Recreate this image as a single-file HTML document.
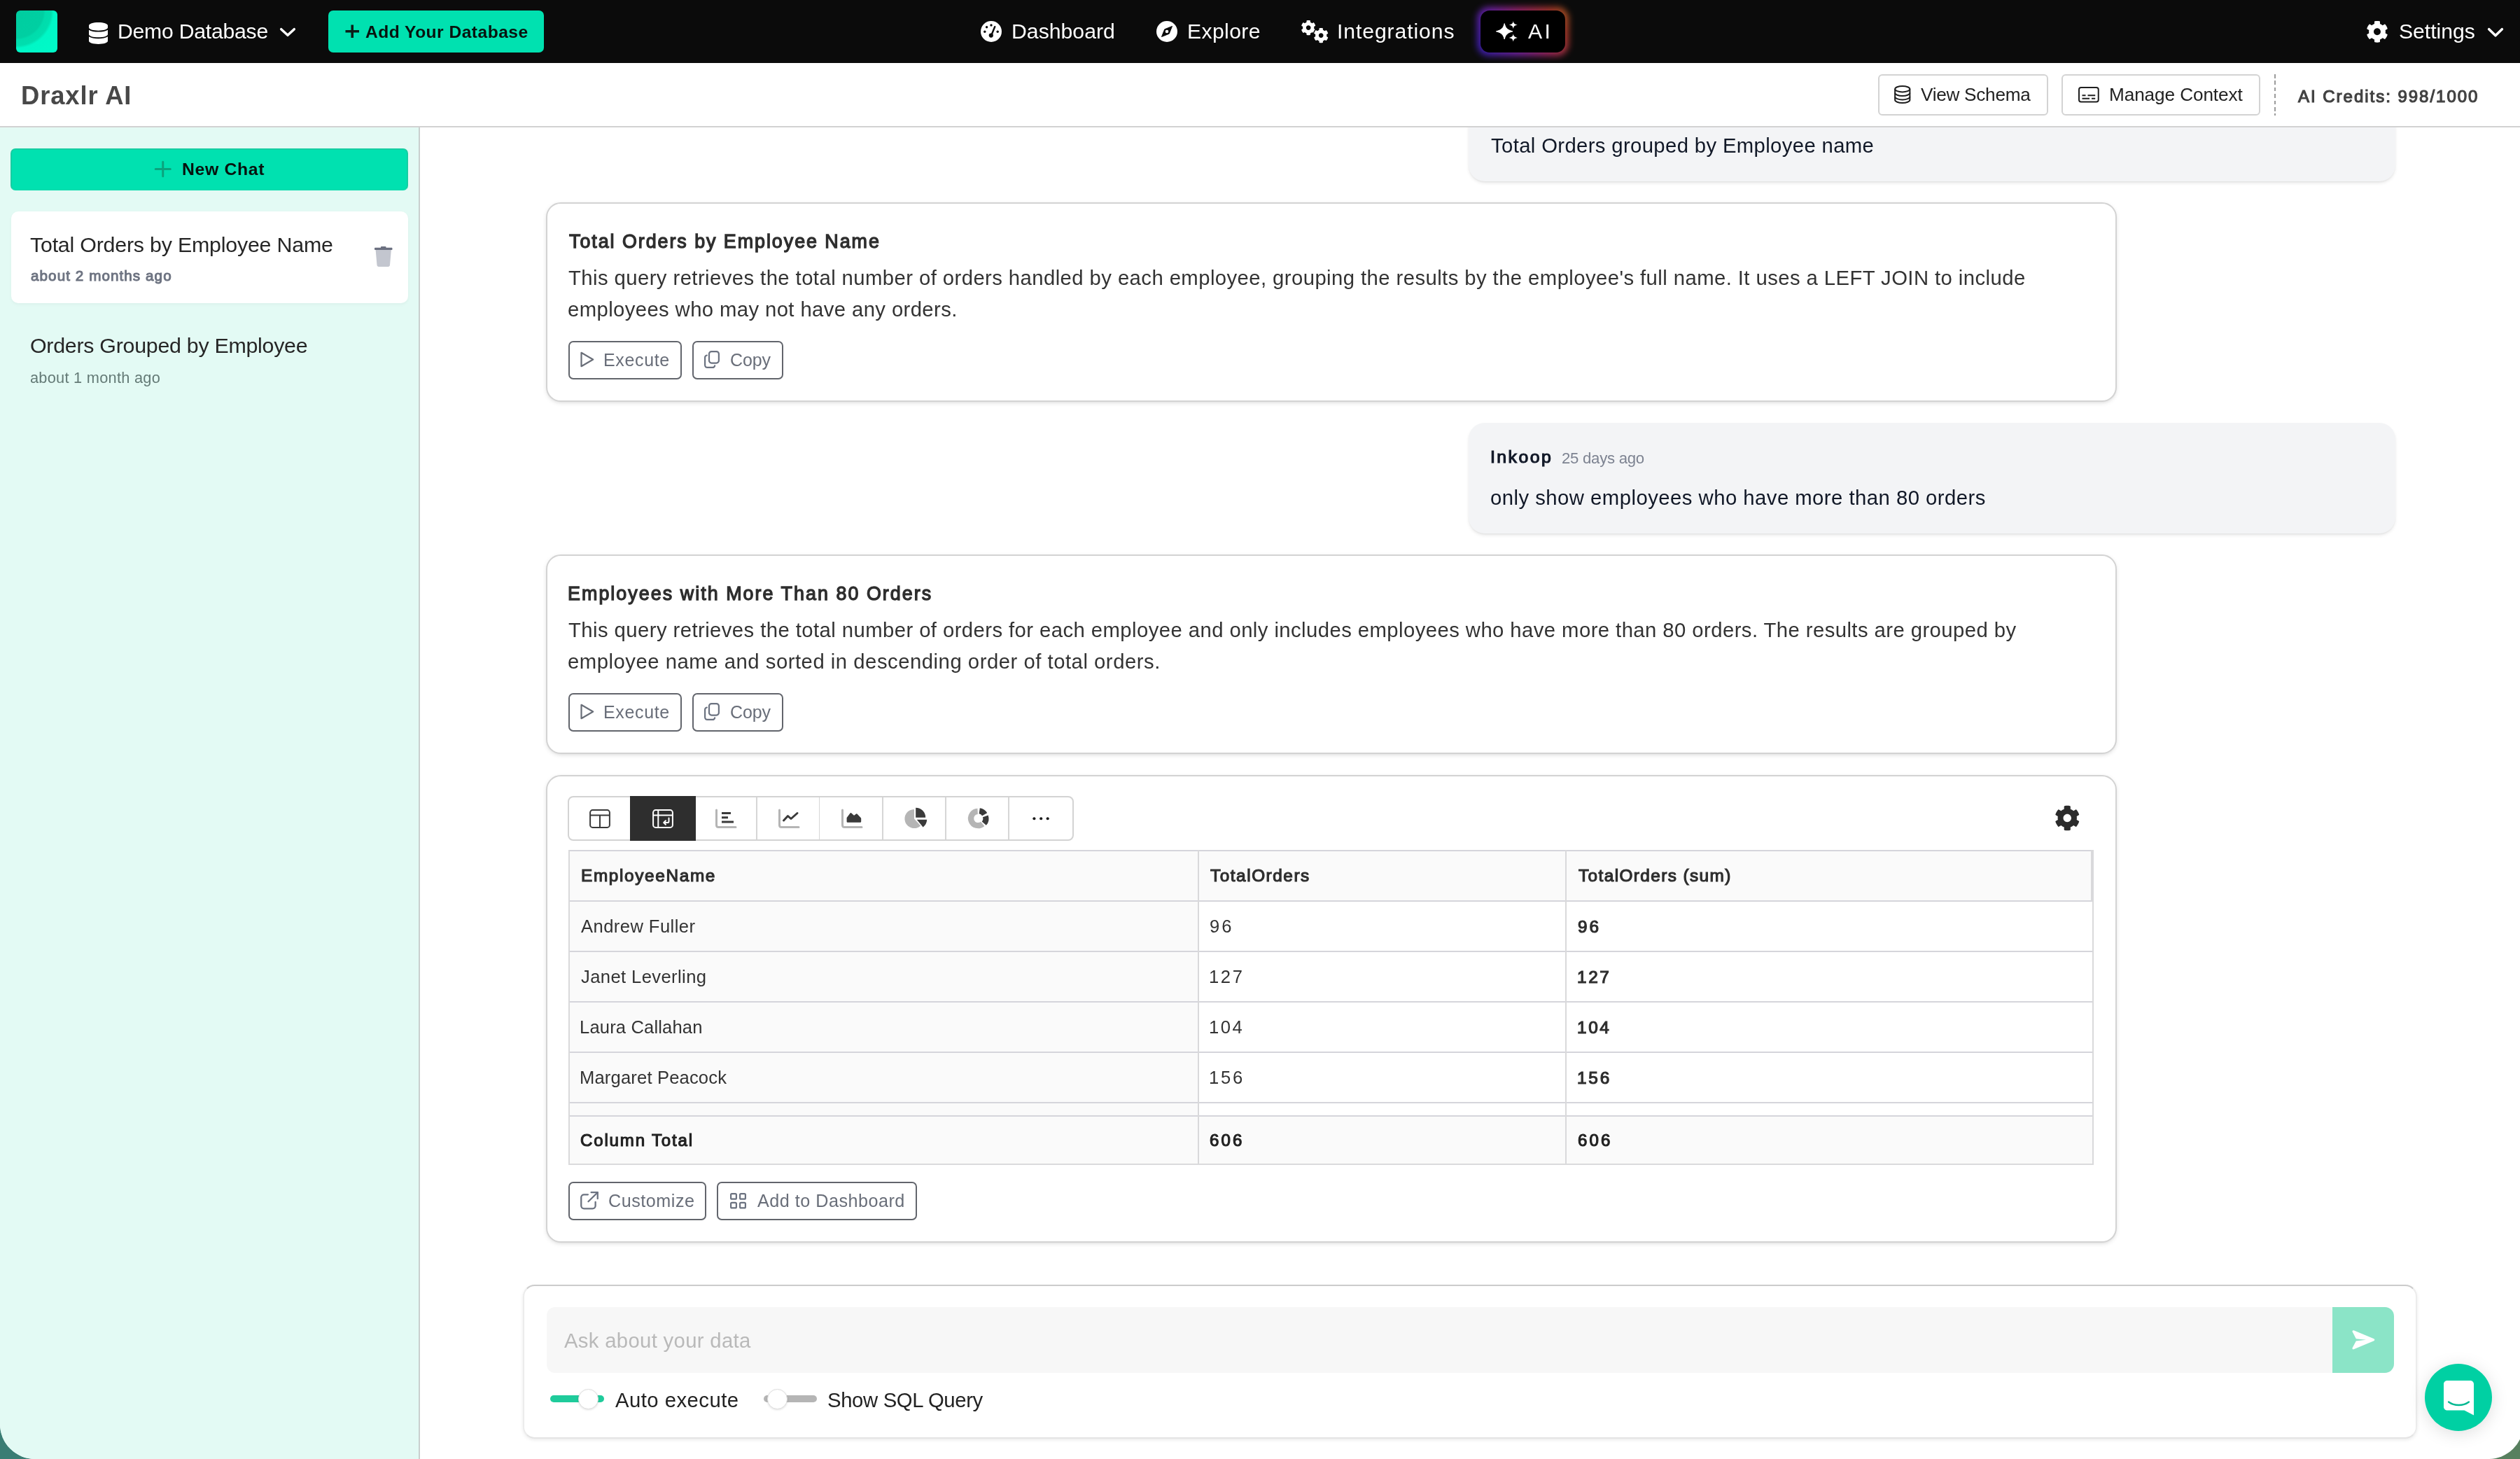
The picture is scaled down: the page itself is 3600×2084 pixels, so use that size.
<!DOCTYPE html>
<html lang="en"><head><meta charset="utf-8"><title>Draxlr AI</title>
<style>
html,body{margin:0;padding:0;}
html{overflow:hidden;background:#fff;}
body{width:3600px;height:2084px;overflow:hidden;background:linear-gradient(90deg,#3a7d74 0,#4a7f6c 50%,#58805f 100%);font-family:"Liberation Sans",Arial,sans-serif;}
#app{position:relative;width:3605px;height:2084px;background:#fff;overflow:hidden;border-radius:0 0 50px 50px;}
.t{position:absolute;white-space:nowrap;line-height:1;will-change:transform;}
.b{position:absolute;box-sizing:border-box;}
svg{position:absolute;overflow:visible;}

</style></head><body>
<div id="app">
<div class="b" style="left:2098px;top:150px;width:1324.3px;height:109px;background:#f3f4f6;box-shadow:0 3px 5px rgba(0,0,0,.07),0 2px 3px -1px rgba(0,0,0,.07);border-radius:23px;"></div>
<nav>
<div class="b" style="left:0px;top:0px;width:3600px;height:90px;background:#0b0b0b;"></div>
<div class="b" style="left:23px;top:15px;width:59px;height:60px;border-radius:6px;background:radial-gradient(circle at 0 0, #00cda0 0, #00cfa2 39px, #00dcac 42px, #00deae 50px, #00f7c6 54px, #00fac8 100%);"></div>
<svg style="left:127px;top:31.5px" width="27" height="31" viewBox="0 0 448 512" preserveAspectRatio="none"><path fill="#fff" d="M448 73.143v45.714C448 159.143 347.667 192 224 192S0 159.143 0 118.857V73.143C0 32.857 100.333 0 224 0s224 32.857 224 73.143zM448 176v102.857C448 319.143 347.667 352 224 352S0 319.143 0 278.857V176c48.125 33.143 136.208 48.572 224 48.572S399.874 209.143 448 176zm0 160v102.857C448 479.143 347.667 512 224 512S0 479.143 0 438.857V336c48.125 33.143 136.208 48.572 224 48.572S399.874 369.143 448 336z"/></svg>
<div class="t" style="left:168.02px;top:30.24px;font-size:30.20px;letter-spacing:-0.243px;color:#fff;">Demo Database</div>
<svg style="left:400px;top:40px" width="22" height="12" viewBox="0 0 22 12"><path d="M1.7 1.7 L11 10.3 L20.3 1.7" fill="none" stroke="#fff" stroke-width="3.5" stroke-linecap="round" stroke-linejoin="round"/></svg>
<div class="b" style="left:469px;top:15px;width:308px;height:60px;background:#00e1b0;border-radius:7px;"></div>
<svg style="left:492.5px;top:35px" width="20.5" height="19.5" viewBox="0 0 20.5 19.5"><path d="M10.25 0.5V19 M0.5 9.75H20" fill="none" stroke="#0c1f18" stroke-width="3.6"/></svg>
<div class="t" style="left:522.41px;top:33.88px;font-size:24.60px;letter-spacing:0.471px;color:#08130f;font-weight:700;">Add Your Database</div>
<svg style="left:1401px;top:29.5px" width="30" height="30" viewBox="0 0 30 30"><circle cx="15" cy="15" r="15" fill="#fff"/>
<circle cx="5.800" cy="15.200" r="1.700" fill="#0b0b0b"/><circle cx="8.600" cy="8.800" r="1.700" fill="#0b0b0b"/><circle cx="15" cy="6" r="1.700" fill="#0b0b0b"/><circle cx="24.200" cy="15.200" r="1.700" fill="#0b0b0b"/>
<path d="M20.200 8.200 L15.600 19.500" stroke="#0b0b0b" stroke-width="2.400" stroke-linecap="round"/><circle cx="14.800" cy="20.600" r="3.100" fill="#0b0b0b"/></svg>
<div class="t" style="left:1445.02px;top:30.24px;font-size:30.20px;letter-spacing:0.021px;color:#fff;">Dashboard</div>
<svg style="left:1652px;top:29.5px" width="30" height="30" viewBox="0 0 30 30"><circle cx="15" cy="15" r="15" fill="#fff"/>
<path d="M22.500 7.500 L18.200 18.200 L7.500 22.500 L11.800 11.800 Z" fill="#0b0b0b" stroke="#0b0b0b" stroke-width="1" stroke-linejoin="round"/><circle cx="15" cy="15" r="2.300" fill="#fff"/></svg>
<div class="t" style="left:1695.52px;top:30.24px;font-size:30.20px;letter-spacing:0.360px;color:#fff;">Explore</div>
<svg style="left:1858.700px;top:29.300px" width="20.400" height="21.200" viewBox="14 10 484 492" preserveAspectRatio="none"><path fill="#fff" d="M487.4 315.7l-42.6-24.6c4.3-23.2 4.3-47 0-70.2l42.6-24.6c4.9-2.8 7.1-8.6 5.5-14-11.1-35.6-30-67.8-54.7-94.600-3.800-4.100-10-5.100-14.800-2.300L380.800 110c-17.900-15.400-38.500-27.300-60.800-35.100V25.800c0-5.600-3.900-10.500-9.400-11.700-36.700-8.200-74.300-7.800-109.200 0-5.500 1.200-9.400 6.100-9.400 11.700V75c-22.200 7.900-42.800 19.800-60.800 35.100L88.700 85.500c-4.900-2.800-11-1.900-14.800 2.300-24.700 26.700-43.600 58.900-54.700 94.600-1.700 5.400.6 11.200 5.500 14L67.300 221c-4.300 23.200-4.300 47 0 70.200l-42.600 24.600c-4.900 2.800-7.100 8.600-5.500 14 11.100 35.600 30 67.800 54.700 94.600 3.800 4.100 10 5.100 14.800 2.300l42.600-24.600c17.900 15.400 38.500 27.300 60.800 35.100v49.200c0 5.600 3.900 10.500 9.400 11.700 36.700 8.200 74.300 7.800 109.200 0 5.500-1.200 9.400-6.100 9.400-11.700v-49.200c22.200-7.900 42.800-19.800 60.800-35.100l42.600 24.600c4.900 2.800 11 1.900 14.800-2.300 24.700-26.700 43.600-58.900 54.700-94.600 1.500-5.500-.7-11.300-5.600-14.100zM256 336c-44.100 0-80-35.900-80-80s35.900-80 80-80 80 35.900 80 80-35.900 80-80 80z"/></svg>
<svg style="left:1876.500px;top:39.800px" width="20.400" height="21.200" viewBox="14 10 484 492" preserveAspectRatio="none"><path fill="#fff" stroke="#0b0b0b" stroke-width="70" paint-order="stroke" d="M487.4 315.7l-42.6-24.6c4.3-23.2 4.3-47 0-70.2l42.6-24.6c4.9-2.8 7.1-8.6 5.5-14-11.1-35.6-30-67.8-54.7-94.600-3.800-4.100-10-5.100-14.800-2.300L380.800 110c-17.900-15.400-38.500-27.300-60.800-35.100V25.800c0-5.600-3.900-10.500-9.400-11.700-36.700-8.200-74.300-7.800-109.200 0-5.500 1.200-9.400 6.100-9.400 11.700V75c-22.200 7.900-42.800 19.800-60.800 35.100L88.700 85.500c-4.900-2.800-11-1.900-14.800 2.300-24.700 26.700-43.600 58.900-54.700 94.600-1.700 5.400.6 11.200 5.500 14L67.300 221c-4.300 23.200-4.300 47 0 70.200l-42.600 24.600c-4.900 2.800-7.100 8.600-5.500 14 11.100 35.600 30 67.800 54.700 94.600 3.800 4.100 10 5.100 14.800 2.300l42.600-24.600c17.900 15.400 38.500 27.300 60.800 35.100v49.200c0 5.600 3.900 10.500 9.400 11.700 36.700 8.200 74.300 7.800 109.200 0 5.500-1.200 9.400-6.100 9.400-11.700v-49.200c22.200-7.900 42.800-19.800 60.800-35.100l42.600 24.600c4.900 2.800 11 1.900 14.800-2.300 24.700-26.700 43.600-58.900 54.700-94.600 1.500-5.500-.7-11.300-5.600-14.100zM256 336c-44.100 0-80-35.900-80-80s35.900-80 80-80 80 35.900 80 80-35.900 80-80 80z"/></svg>
<div class="t" style="left:1909.72px;top:30.24px;font-size:30.20px;letter-spacing:0.891px;color:#fff;">Integrations</div>
<div class="b" style="left:2110px;top:10px;width:130.5px;height:69.5px;border-radius:17px;background:linear-gradient(60deg,#3a22d9 0%,#8a28c8 35%,#c42d7a 60%,#d6452f 85%,#d97a2a 100%);filter:blur(5px);opacity:.78;"></div>
<div class="b" style="left:2115px;top:15px;width:120.5px;height:59.5px;border-radius:13px;background:#000;"></div>
<svg style="left:2137.5px;top:30px" width="30" height="29.5" viewBox="0 0 30 29.5">
<path fill="#fff" d="M11.2 3.6 C12.8 10.2 15.400 12.800 23 14.800 C15.400 16.800 12.800 19.400 11.200 26 C9.600 19.400 7 16.800 -0.600 14.800 C7 12.800 9.600 10.200 11.200 3.600Z" stroke="#fff" stroke-width="1" stroke-linejoin="round"/>
<path fill="#fff" d="M23.8 0 C24.4 3.5 25.500 4.600 29.800 5.600 C25.500 6.600 24.400 7.700 23.800 11.200 C23.200 7.700 22.100 6.600 17.800 5.600 C22.100 4.600 23.200 3.500 23.800 0Z"/>
<path fill="#fff" d="M23.8 18.3 C24.4 21.8 25.500 22.900 29.800 23.900 C25.500 24.900 24.400 26 23.800 29.500 C23.200 26 22.100 24.900 17.800 23.900 C22.100 22.900 23.200 21.800 23.800 18.300Z"/></svg>
<div class="t" style="left:2182.94px;top:30.24px;font-size:30.20px;letter-spacing:3.300px;color:#fff;">AI</div>
<svg style="left:3381.25px;top:29.5px" width="30" height="30.5" viewBox="14 10 484 492" preserveAspectRatio="none"><path fill="#fff" d="M487.4 315.7l-42.6-24.6c4.3-23.2 4.3-47 0-70.2l42.6-24.6c4.9-2.8 7.1-8.6 5.5-14-11.1-35.6-30-67.8-54.7-94.600-3.800-4.100-10-5.100-14.800-2.300L380.800 110c-17.900-15.400-38.500-27.300-60.800-35.100V25.800c0-5.600-3.900-10.500-9.400-11.700-36.700-8.200-74.300-7.800-109.200 0-5.500 1.200-9.400 6.100-9.400 11.700V75c-22.200 7.900-42.800 19.800-60.800 35.100L88.700 85.500c-4.900-2.800-11-1.900-14.800 2.300-24.700 26.700-43.600 58.900-54.700 94.600-1.700 5.400.6 11.200 5.500 14L67.300 221c-4.300 23.200-4.300 47 0 70.200l-42.600 24.600c-4.900 2.800-7.100 8.600-5.500 14 11.100 35.600 30 67.800 54.700 94.600 3.800 4.100 10 5.100 14.800 2.300l42.600-24.600c17.900 15.400 38.500 27.300 60.800 35.100v49.200c0 5.600 3.900 10.500 9.400 11.700 36.700 8.200 74.300 7.800 109.200 0 5.500-1.200 9.400-6.100 9.400-11.700v-49.200c22.200-7.900 42.800-19.800 60.800-35.100l42.600 24.600c4.900 2.800 11 1.900 14.800-2.300 24.700-26.700 43.600-58.900 54.700-94.600 1.500-5.500-.7-11.300-5.600-14.100zM256 336c-44.100 0-80-35.900-80-80s35.900-80 80-80 80 35.900 80 80-35.900 80-80 80z"/></svg>
<div class="t" style="left:3426.64px;top:30.24px;font-size:30.20px;letter-spacing:-0.025px;color:#fff;">Settings</div>
<svg style="left:3553.5px;top:39.5px" width="22" height="12.5" viewBox="0 0 22 12.500"><path d="M1.7 1.7 L11 10.8 L20.3 1.7" fill="none" stroke="#fff" stroke-width="3.5" stroke-linecap="round" stroke-linejoin="round"/></svg>
</nav>
<header>
<div class="b" style="left:0px;top:90px;width:3600px;height:92px;background:#fff;border-bottom:2px solid #d2d2d2;"></div>
<div class="t" style="left:30.20px;top:119.39px;font-size:36.40px;letter-spacing:0.882px;color:#484848;font-weight:700;">Draxlr AI</div>
<div class="b" style="left:2682.5px;top:105.5px;width:243px;height:59px;border:2px solid #d3d3d3;border-radius:6px;background:#fff;"></div>
<svg style="left:2705.5px;top:122px" width="23.500" height="26" viewBox="0 0 23.500 26"><g fill="none" stroke="#1f1f1f" stroke-width="2">
<ellipse cx="11.75" cy="5.200" rx="10.600" ry="4.200"/><path d="M1.150 5.200V20.800C1.150 23.100 5.900 25 11.750 25S22.350 23.100 22.350 20.800V5.200"/><path d="M1.150 10.800C1.150 13.100 5.900 15 11.750 15S22.350 13.100 22.350 10.800"/><path d="M1.150 16.200C1.150 18.500 5.900 20.400 11.750 20.400S22.350 18.500 22.350 16.200"/></g></svg>
<div class="t" style="left:2744.40px;top:122.22px;font-size:26.20px;letter-spacing:-0.288px;color:#222;">View Schema</div>
<div class="b" style="left:2945px;top:105.5px;width:283.5px;height:59px;border:2px solid #d3d3d3;border-radius:6px;background:#fff;"></div>
<svg style="left:2969.25px;top:123.75px" width="29.75" height="22.5" viewBox="0 0 29.75 22.500"><g fill="none" stroke="#1f1f1f" stroke-width="2">
<rect x="1" y="1" width="27.750" height="20.500" rx="3"/><path d="M5.500 12.200H10.500M13.500 12.200H24.200M5.500 16.800H16M19 16.800H24.200"/></g></svg>
<div class="t" style="left:3012.85px;top:122.22px;font-size:26.20px;letter-spacing:-0.110px;color:#222;">Manage Context</div>
<div class="b" style="left:3249px;top:105.5px;width:2px;height:59.5px;background:repeating-linear-gradient(180deg,#9b9b9b 0,#9b9b9b 5.6px,transparent 5.6px,transparent 9.4px);"></div>
<div class="t" style="left:3283.03px;top:126.45px;font-size:24.06px;letter-spacing:1.957px;color:#424242;-webkit-text-stroke:1.15px #424242;">AI Credits: 998/1000</div>
</header>
<aside>
<div class="b" style="left:0px;top:182px;width:600px;height:1902px;background:#e3faf4;border-right:2px solid #c9cfce;"></div>
<div class="b" style="left:15px;top:212px;width:568px;height:60px;background:#00e1b0;border:2px solid #17cda2;border-bottom-color:#08dcad;border-radius:7px;"></div>
<svg style="left:220.5px;top:230px" width="23.500" height="23" viewBox="0 0 23.500 23"><path d="M11.75 1.200V21.800 M1.200 11.500H22.300" fill="none" stroke="#0ba27d" stroke-width="3" stroke-linecap="round"/></svg>
<div class="t" style="left:260.36px;top:229.96px;font-size:24.80px;letter-spacing:0.635px;color:#08130f;font-weight:700;">New Chat</div>
<div class="b" style="left:15.5px;top:302px;width:567.5px;height:130.5px;background:#fff;border-radius:10px;box-shadow:0 2px 5px rgba(0,0,0,.04);"></div>
<div class="t" style="left:43.33px;top:333.67px;font-size:30.40px;letter-spacing:-0.224px;color:#262626;">Total Orders by Employee Name</div>
<div class="t" style="left:43.63px;top:384.20px;font-size:20.68px;letter-spacing:1.054px;color:#6d7381;-webkit-text-stroke:0.99px #6d7381;">about 2 months ago</div>
<svg style="left:534.5px;top:352px" width="25.500" height="29" viewBox="0 0 25.500 29"><path fill="#c3c6cf" d="M1.600 4.500H23.900L22 26.600C21.900 28 20.900 29 19.500 29H6C4.600 29 3.600 28 3.500 26.600Z"/>
<path fill="#6b7080" d="M9 0.800C9 0.300 9.400 0 9.900 0H15.600C16.100 0 16.500 0.300 16.500 0.800V1.800H24.300C25 1.800 25.500 2.300 25.500 3V4.200C25.500 4.700 25.100 5 24.600 5H0.900C0.400 5 0 4.700 0 4.200V3C0 2.300 0.500 1.800 1.200 1.800H9Z"/></svg>
<div class="t" style="left:42.57px;top:478.47px;font-size:30.40px;letter-spacing:-0.283px;color:#262626;">Orders Grouped by Employee</div>
<div class="t" style="left:43.08px;top:529.25px;font-size:21.80px;letter-spacing:0.250px;color:#647a76;">about 1 month ago</div>
</aside>
<main>
<div class="t" style="left:2130.36px;top:192.90px;font-size:29.30px;letter-spacing:0.354px;color:#111827;">Total Orders grouped by Employee name</div>
<div class="b" style="left:780px;top:289px;width:2244px;height:284.5px;background:#fff;border:2px solid #d3d3d3;border-radius:21px;box-shadow:0 2px 6px rgba(0,0,0,.09),0 2px 4px -2px rgba(0,0,0,.08);"></div>
<div class="t" style="left:812.55px;top:331.80px;font-size:26.88px;letter-spacing:1.947px;color:#2e2e2e;-webkit-text-stroke:1.29px #2e2e2e;">Total Orders by Employee Name</div>
<div class="t" style="left:811.86px;top:382.40px;font-size:29.30px;letter-spacing:0.414px;color:#333;">This query retrieves the total number of orders handled by each employee, grouping the results by the employee&#x27;s full name. It uses a LEFT JOIN to include</div>
<div class="t" style="left:811.27px;top:427.40px;font-size:29.30px;letter-spacing:0.380px;color:#333;">employees who may not have any orders.</div>
<div class="b" style="left:812px;top:486.5px;width:161.5px;height:55.5px;border:2px solid #62656c;border-radius:7px;background:#fff;"></div>
<svg style="left:828.75px;top:502.0px" width="19.5" height="23" viewBox="0 0 19.500 23"><path d="M1.500 1.800V21.200L18.200 11.500Z" fill="none" stroke="#696e78" stroke-width="2.2" stroke-linejoin="round"/></svg>
<div class="t" style="left:862.45px;top:501.54px;font-size:25.00px;letter-spacing:0.637px;color:#696e79;">Execute</div>
<div class="b" style="left:989px;top:486.5px;width:130px;height:55.5px;border:2px solid #62656c;border-radius:7px;background:#fff;"></div>
<svg style="left:1006.25px;top:500.5px" width="22" height="25" viewBox="0 0 22 25"><g fill="none" stroke="#6b7280" stroke-width="2.200" stroke-linejoin="round" stroke-linecap="round"><rect x="7" y="1.100" width="13.900" height="16.500" rx="3.500"/><path d="M3.800 6.500C2 6.800 1.100 8 1.100 9.800V20.200C1.100 22.400 2.600 23.900 4.800 23.900H11.800C13.600 23.900 14.700 23 15.100 21.400"/></g></svg>
<div class="t" style="left:1042.50px;top:501.54px;font-size:25.00px;letter-spacing:-0.104px;color:#696e79;">Copy</div>
<div class="b" style="left:2098px;top:603.5px;width:1324.3px;height:158.3px;background:#f3f4f6;box-shadow:0 3px 5px rgba(0,0,0,.07),0 2px 3px -1px rgba(0,0,0,.07);border-radius:23px;"></div>
<div class="t" style="left:2128.71px;top:640.90px;font-size:24.82px;letter-spacing:2.442px;color:#111827;-webkit-text-stroke:1.19px #111827;">Inkoop</div>
<div class="t" style="left:2231.19px;top:643.71px;font-size:22.20px;letter-spacing:-0.274px;color:#7d8391;">25 days ago</div>
<div class="t" style="left:2129.17px;top:696.00px;font-size:29.30px;letter-spacing:0.464px;color:#111827;">only show employees who have more than 80 orders</div>
<div class="b" style="left:780px;top:792px;width:2244px;height:285px;background:#fff;border:2px solid #d3d3d3;border-radius:21px;box-shadow:0 2px 6px rgba(0,0,0,.09),0 2px 4px -2px rgba(0,0,0,.08);"></div>
<div class="t" style="left:810.94px;top:834.80px;font-size:26.88px;letter-spacing:2.034px;color:#2e2e2e;-webkit-text-stroke:1.29px #2e2e2e;">Employees with More Than 80 Orders</div>
<div class="t" style="left:811.86px;top:885.40px;font-size:29.30px;letter-spacing:0.418px;color:#333;">This query retrieves the total number of orders for each employee and only includes employees who have more than 80 orders. The results are grouped by</div>
<div class="t" style="left:811.27px;top:930.40px;font-size:29.30px;letter-spacing:0.506px;color:#333;">employee name and sorted in descending order of total orders.</div>
<div class="b" style="left:812px;top:989.5px;width:161.5px;height:55.5px;border:2px solid #62656c;border-radius:7px;background:#fff;"></div>
<svg style="left:828.75px;top:1005.0px" width="19.5" height="23" viewBox="0 0 19.500 23"><path d="M1.500 1.800V21.200L18.200 11.500Z" fill="none" stroke="#696e78" stroke-width="2.2" stroke-linejoin="round"/></svg>
<div class="t" style="left:862.45px;top:1004.54px;font-size:25.00px;letter-spacing:0.637px;color:#696e79;">Execute</div>
<div class="b" style="left:989px;top:989.5px;width:130px;height:55.5px;border:2px solid #62656c;border-radius:7px;background:#fff;"></div>
<svg style="left:1006.25px;top:1003.5px" width="22" height="25" viewBox="0 0 22 25"><g fill="none" stroke="#6b7280" stroke-width="2.200" stroke-linejoin="round" stroke-linecap="round"><rect x="7" y="1.100" width="13.900" height="16.500" rx="3.500"/><path d="M3.800 6.500C2 6.800 1.100 8 1.100 9.800V20.200C1.100 22.400 2.600 23.900 4.800 23.900H11.800C13.600 23.900 14.700 23 15.100 21.400"/></g></svg>
<div class="t" style="left:1042.50px;top:1004.54px;font-size:25.00px;letter-spacing:-0.104px;color:#696e79;">Copy</div>
<div class="b" style="left:780px;top:1106.5px;width:2244px;height:668.5px;background:#fff;border:2px solid #d3d3d3;border-radius:21px;box-shadow:0 2px 6px rgba(0,0,0,.09),0 2px 4px -2px rgba(0,0,0,.08);"></div>
<div class="b" style="left:810.5px;top:1137px;width:723px;height:63.5px;border:2px solid #d3d3d3;border-radius:8px;background:#fff;"></div>
<div class="b" style="left:1080px;top:1139px;width:1.7px;height:59.5px;background:#d6d6d6;"></div>
<div class="b" style="left:1169.5px;top:1139px;width:1.7px;height:59.5px;background:#d6d6d6;"></div>
<div class="b" style="left:1260px;top:1139px;width:1.7px;height:59.5px;background:#d6d6d6;"></div>
<div class="b" style="left:1350px;top:1139px;width:1.7px;height:59.5px;background:#d6d6d6;"></div>
<div class="b" style="left:1440.2px;top:1139px;width:1.7px;height:59.5px;background:#d6d6d6;"></div>
<div class="b" style="left:900px;top:1137px;width:94px;height:63.5px;background:#2e2e2e;"></div>
<svg style="left:842.0px;top:1155.5px" width="30" height="27" viewBox="0 0 30 27"><g fill="none" stroke="#3a3a3a" stroke-width="2"><rect x="1.100" y="1.100" width="27.800" height="24.800" rx="3.500"/><path d="M1.100 8.500H28.900M15 8.500V25.900"/></g></svg>
<svg style="left:932.0px;top:1155.5px" width="30" height="27" viewBox="0 0 30 27"><g fill="none" stroke="#fff" stroke-width="2"><rect x="1.100" y="1.100" width="27.800" height="24.800" rx="3.500"/><path d="M1.100 8.500H28.900M8.300 1.100V25.900"/><path d="M23.500 12.500V17.200C23.500 18.300 22.800 19 21.700 19H16.500M19 16.200L16.200 19L19 21.800" stroke-linecap="round" stroke-linejoin="round"/></g></svg>
<svg style="left:1022.0px;top:1155.5px" width="30" height="27" viewBox="0 0 30 27"><path d="M1.500 1V22.500C1.500 24.300 2.700 25.500 4.500 25.500H29" fill="none" stroke="#b5b5b5" stroke-width="3" stroke-linecap="round"/><path d="M9 5.500H22M9 11.800H18M9 18H26" stroke="#3a3a3a" stroke-width="3" fill="none"/></svg>
<svg style="left:1112.0px;top:1155.5px" width="30" height="27" viewBox="0 0 30 27"><path d="M1.500 1V22.500C1.500 24.300 2.700 25.500 4.500 25.500H29" fill="none" stroke="#b5b5b5" stroke-width="3" stroke-linecap="round"/><path d="M7.500 16L13.500 9.500L18 13.500L27 5.500" stroke="#3a3a3a" stroke-width="3" fill="none" stroke-linecap="round" stroke-linejoin="round"/></svg>
<svg style="left:1202.0px;top:1155.5px" width="30" height="27" viewBox="0 0 30 27"><path d="M1.500 1V22.500C1.500 24.300 2.700 25.500 4.500 25.500H29" fill="none" stroke="#b5b5b5" stroke-width="3" stroke-linecap="round"/><path d="M8.800 17.500V12.500L13.500 6.300L18 10.500L21.800 7.500L27 13V17.500Z" fill="#3a3a3a" stroke="#3a3a3a" stroke-width="2.400" stroke-linejoin="round"/></svg>
<svg style="left:1290px;top:1150px" width="40" height="40" viewBox="1290 1150 40 40"><path d="M1306 1155.900A13.600 13.600 0 1 0 1315.200 1179.500L1306 1169.500Z" fill="#b5b5b5"/><path d="M1308.200 1153.700A14 14 0 0 1 1322.200 1167.700H1308.200Z" fill="#3a3a3a"/><path d="M1309.800 1170.700H1324.200A14.400 14.400 0 0 1 1318.600 1181.400Z" fill="#3a3a3a"/></svg>
<svg style="left:1377px;top:1149px" width="40" height="40" viewBox="1377 1149 40 40"><g fill="none" stroke-width="8.200"><path d="M1403.76 1176.81A10.2 10.2 0 1 1 1396.67 1158.81" stroke="#b5b5b5"/><path d="M1399.22 1158.30A10.2 10.2 0 0 1 1406.63 1163.30" stroke="#3a3a3a"/><path d="M1407.78 1165.81A10.2 10.2 0 0 1 1405.78 1176.13" stroke="#3a3a3a"/></g></svg>
<svg style="left:1472.0px;top:1155.5px" width="30" height="27" viewBox="0 0 30 27"><circle cx="5.400" cy="13.300" r="2.050" fill="#1c1c1c"/><circle cx="15.200" cy="13.300" r="2.050" fill="#1c1c1c"/><circle cx="24.700" cy="13.300" r="2.050" fill="#1c1c1c"/></svg>
<svg style="left:2936px;top:1150.5px" width="34.500" height="35.2" viewBox="14 10 484 492" preserveAspectRatio="none"><path fill="#2b2b2b" d="M487.4 315.7l-42.6-24.6c4.3-23.2 4.3-47 0-70.2l42.6-24.6c4.9-2.8 7.1-8.6 5.5-14-11.1-35.6-30-67.8-54.7-94.600-3.800-4.100-10-5.100-14.800-2.300L380.800 110c-17.900-15.400-38.500-27.300-60.800-35.100V25.800c0-5.600-3.900-10.500-9.400-11.700-36.700-8.200-74.300-7.800-109.200 0-5.500 1.200-9.400 6.100-9.400 11.700V75c-22.200 7.900-42.800 19.800-60.800 35.100L88.700 85.500c-4.900-2.800-11-1.900-14.800 2.300-24.700 26.700-43.600 58.900-54.700 94.600-1.700 5.400.6 11.200 5.500 14L67.300 221c-4.300 23.200-4.300 47 0 70.200l-42.600 24.600c-4.900 2.800-7.100 8.600-5.500 14 11.100 35.600 30 67.800 54.700 94.600 3.800 4.100 10 5.100 14.800 2.300l42.600-24.600c17.900 15.400 38.500 27.300 60.800 35.100v49.200c0 5.600 3.900 10.500 9.400 11.700 36.700 8.200 74.300 7.800 109.200 0 5.500-1.200 9.400-6.100 9.400-11.700v-49.200c22.200-7.900 42.800-19.800 60.800-35.100l42.600 24.600c4.900 2.800 11 1.900 14.800-2.300 24.700-26.700 43.600-58.900 54.700-94.600 1.500-5.500-.7-11.300-5.600-14.100zM256 336c-44.100 0-80-35.900-80-80s35.900-80 80-80 80 35.900 80 80-35.900 80-80 80z"/></svg>
<div class="b" style="left:812px;top:1214px;width:2179px;height:450px;background:#fff;"></div>
<div class="b" style="left:812px;top:1214px;width:2179px;height:73px;background:#fafafa;"></div>
<div class="b" style="left:812px;top:1214px;width:900px;height:449px;background:#fafafa;"></div>
<div class="b" style="left:812px;top:1594px;width:2179px;height:69px;background:#fafafa;"></div>
<div class="b" style="left:812px;top:1662px;width:2179px;height:2px;background:#dadadc;"></div>
<div class="b" style="left:812px;top:1214px;width:2179px;height:2px;background:#d5d5db;"></div>
<div class="b" style="left:812px;top:1286px;width:2179px;height:2px;background:#d5d5db;"></div>
<div class="b" style="left:812px;top:1358px;width:2179px;height:2px;background:#d5d5db;"></div>
<div class="b" style="left:812px;top:1430px;width:2179px;height:2px;background:#d5d5db;"></div>
<div class="b" style="left:812px;top:1502px;width:2179px;height:2px;background:#d5d5db;"></div>
<div class="b" style="left:812px;top:1574px;width:2179px;height:2px;background:#d5d5db;"></div>
<div class="b" style="left:812px;top:1593px;width:2179px;height:2px;background:#d5d5db;"></div>
<div class="b" style="left:812px;top:1214px;width:2px;height:450px;background:#d9d9db;"></div>
<div class="b" style="left:1711px;top:1214px;width:2px;height:450px;background:#d9d9db;"></div>
<div class="b" style="left:2236px;top:1214px;width:2px;height:450px;background:#d9d9db;"></div>
<div class="b" style="left:2989px;top:1214px;width:2px;height:450px;background:#d9d9db;"></div>
<div class="b" style="left:2986.5px;top:1214px;width:2px;height:73px;background:#d9d9db;"></div>
<div class="t" style="left:829.84px;top:1238.71px;font-size:24.35px;letter-spacing:1.655px;color:#2e2e2e;-webkit-text-stroke:1.17px #2e2e2e;">EmployeeName</div>
<div class="t" style="left:1729.05px;top:1238.71px;font-size:24.35px;letter-spacing:1.541px;color:#2e2e2e;-webkit-text-stroke:1.17px #2e2e2e;">TotalOrders</div>
<div class="t" style="left:2254.65px;top:1238.71px;font-size:24.35px;letter-spacing:1.405px;color:#2e2e2e;-webkit-text-stroke:1.17px #2e2e2e;">TotalOrders (sum)</div>
<div class="t" style="left:829.95px;top:1311.33px;font-size:25.60px;letter-spacing:0.420px;color:#333;">Andrew Fuller</div>
<div class="t" style="left:1727.82px;top:1311.33px;font-size:25.60px;letter-spacing:3.107px;color:#333;">96</div>
<div class="t" style="left:2254.06px;top:1311.81px;font-size:24.35px;letter-spacing:2.925px;color:#2e2e2e;-webkit-text-stroke:1.17px #2e2e2e;">96</div>
<div class="t" style="left:829.62px;top:1383.33px;font-size:25.60px;letter-spacing:0.386px;color:#333;">Janet Leverling</div>
<div class="t" style="left:1727.05px;top:1383.33px;font-size:25.60px;letter-spacing:2.608px;color:#333;">127</div>
<div class="t" style="left:2253.33px;top:1383.81px;font-size:24.35px;letter-spacing:2.643px;color:#2e2e2e;-webkit-text-stroke:1.17px #2e2e2e;">127</div>
<div class="t" style="left:827.90px;top:1455.33px;font-size:25.60px;letter-spacing:0.143px;color:#333;">Laura Callahan</div>
<div class="t" style="left:1727.05px;top:1455.33px;font-size:25.60px;letter-spacing:2.490px;color:#333;">104</div>
<div class="t" style="left:2253.33px;top:1455.81px;font-size:24.35px;letter-spacing:2.637px;color:#2e2e2e;-webkit-text-stroke:1.17px #2e2e2e;">104</div>
<div class="t" style="left:827.90px;top:1527.33px;font-size:25.60px;letter-spacing:0.154px;color:#333;">Margaret Peacock</div>
<div class="t" style="left:1727.05px;top:1527.33px;font-size:25.60px;letter-spacing:2.819px;color:#333;">156</div>
<div class="t" style="left:2253.33px;top:1527.81px;font-size:24.35px;letter-spacing:2.807px;color:#2e2e2e;-webkit-text-stroke:1.17px #2e2e2e;">156</div>
<div class="t" style="left:829.37px;top:1616.55px;font-size:24.06px;letter-spacing:1.840px;color:#222;-webkit-text-stroke:1.15px #222;">Column Total</div>
<div class="t" style="left:1728.37px;top:1616.55px;font-size:24.06px;letter-spacing:3.120px;color:#222;-webkit-text-stroke:1.15px #222;">606</div>
<div class="t" style="left:2253.97px;top:1616.55px;font-size:24.06px;letter-spacing:3.120px;color:#222;-webkit-text-stroke:1.15px #222;">606</div>
<div class="b" style="left:812px;top:1687.5px;width:197px;height:55px;border:2px solid #62656c;border-radius:7px;background:#fff;"></div>
<svg style="left:829px;top:1701.500px" width="26" height="25.5" viewBox="0 0 25 25" preserveAspectRatio="none"><g fill="none" stroke="#6b7280" stroke-width="2.2" stroke-linecap="round" stroke-linejoin="round"><path d="M10.500 4.200H5.200C2.900 4.200 1.200 5.900 1.200 8.200V19.800C1.200 22.100 2.900 23.800 5.200 23.800H16.800C19.100 23.800 20.800 22.100 20.800 19.800V14.500"/><path d="M15 1.200H23.800V10"/><path d="M23.800 1.200L11 14"/></g></svg>
<div class="t" style="left:869.24px;top:1702.67px;font-size:25.20px;letter-spacing:0.511px;color:#696e79;">Customize</div>
<div class="b" style="left:1024px;top:1687.5px;width:286px;height:55px;border:2px solid #62656c;border-radius:7px;background:#fff;"></div>
<svg style="left:1043px;top:1703.5px" width="23" height="22.5" viewBox="0 0 23 22.500"><g fill="none" stroke="#6b7280" stroke-width="2.2"><rect x="1.100" y="1.100" width="7.800" height="7.600" rx="1.500"/><rect x="14.100" y="1.100" width="7.800" height="7.600" rx="1.500"/><rect x="1.100" y="13.800" width="7.800" height="7.600" rx="1.500"/><rect x="14.100" y="13.800" width="7.800" height="7.600" rx="1.500"/></g></svg>
<div class="t" style="left:1082.45px;top:1702.67px;font-size:25.20px;letter-spacing:0.485px;color:#696e79;">Add to Dashboard</div>
<div class="b" style="left:747px;top:1835px;width:2705.5px;height:220px;background:#fff;border:2px solid #ececec;border-top-color:#cccccc;border-bottom-color:#e4e4e4;border-radius:17px;box-shadow:0 2px 5px rgba(0,0,0,.08);"></div>
<div class="b" style="left:781px;top:1867px;width:2551px;height:93.5px;background:#f7f7f7;border-radius:12px 0 0 12px;"></div>
<div class="b" style="left:3332px;top:1867px;width:87.5px;height:93.5px;background:#8be4c7;border-radius:0 13px 13px 0;"></div>
<svg style="left:3359.5px;top:1900px" width="32.500" height="27.600" viewBox="0 0 32.500 27.600"><path fill="#fff" d="M2.500 0.300 L31.300 12.300 C32.700 12.900 32.700 14.700 31.300 15.300 L2.500 27.300 C1.200 27.800 0 26.600 0.600 25.300 L5.800 15.400 L20 13.800 L5.800 12.200 L0.600 2.300 C0 1 1.200 -0.200 2.500 0.300Z"/></svg>
<div class="t" style="left:805.64px;top:1900.20px;font-size:29.30px;letter-spacing:0.318px;color:#b9b9b9;">Ask about your data</div>
<div class="b" style="left:786px;top:1992.5px;width:76.5px;height:10.5px;background:#1fcb9b;border-radius:6px;"></div>
<div class="b" style="left:826.2px;top:1983.8px;width:29px;height:29px;background:#fff;border-radius:50%;border:1.5px solid #dedede;box-shadow:0 1px 3px rgba(0,0,0,.12);"></div>
<div class="t" style="left:878.54px;top:1984.90px;font-size:29.30px;letter-spacing:0.456px;color:#222;">Auto execute</div>
<div class="b" style="left:1091.4px;top:1992.5px;width:75.6px;height:10.5px;background:#b5b5b5;border-radius:6px;"></div>
<div class="b" style="left:1095.5px;top:1983.8px;width:29px;height:29px;background:#fff;border-radius:50%;border:1.5px solid #dedede;box-shadow:0 1px 3px rgba(0,0,0,.12);"></div>
<div class="t" style="left:1181.58px;top:1984.90px;font-size:29.30px;letter-spacing:-0.356px;color:#222;">Show SQL Query</div>
<div class="b" style="left:3464px;top:1948px;width:96px;height:96px;background:#00d0a3;border-radius:50%;box-shadow:0 4px 24px rgba(0,0,0,.13);"></div>
<svg style="left:3491px;top:1972px" width="43" height="50" viewBox="0 0 43 50"><path fill="#fff" d="M5 0H38C40.800 0 43 2.200 43 5V49.500L29.500 42.500H5C2.200 42.500 0 40.300 0 37.500V5C0 2.200 2.200 0 5 0Z"/><path d="M7 30.500C15 36.500 28 36.500 36 30.500" fill="none" stroke="#00b891" stroke-width="2.300" stroke-linecap="round"/></svg>
</main>
</div>
</body></html>
